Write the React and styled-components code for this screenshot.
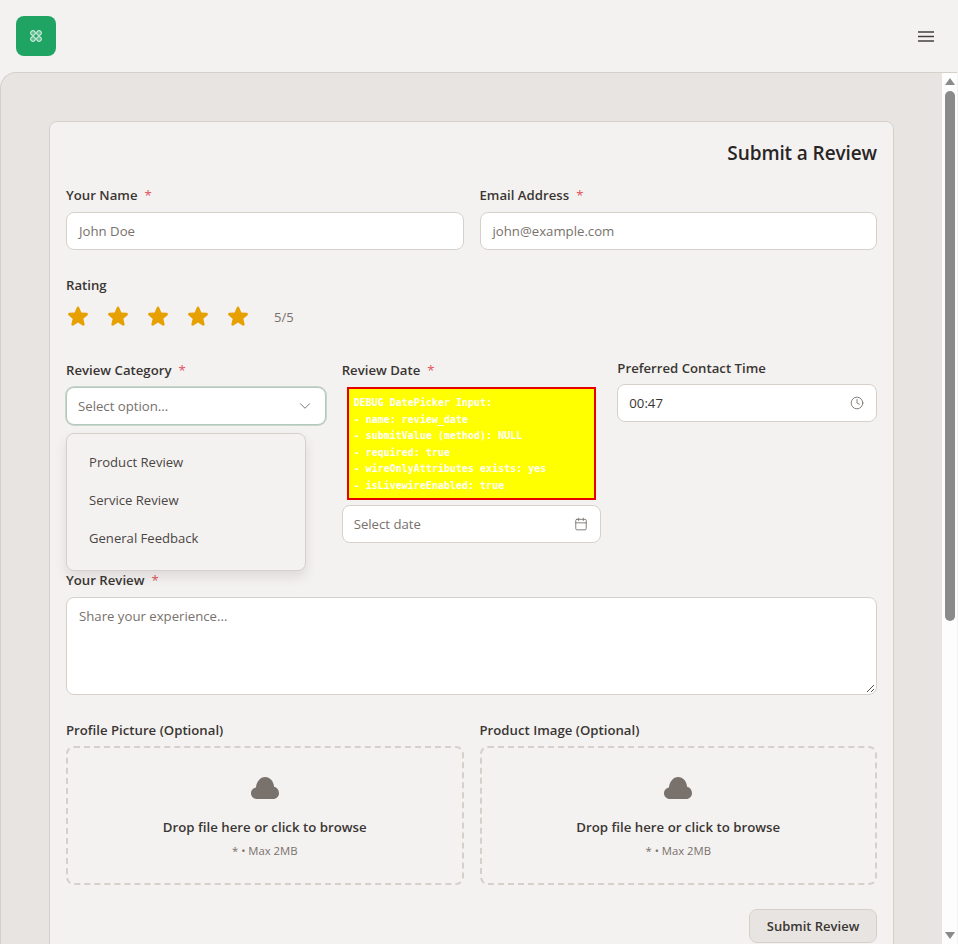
import React from "react";
import styled, { createGlobalStyle } from "styled-components";
import { ChevronDown, Clock, Calendar } from "lucide-react";

const GlobalStyle = createGlobalStyle`
  html, body {
    margin: 0;
    padding: 0;
    height: 100%;
    overflow: hidden;
    background: #f4f2f1;
  }

  * {
    box-sizing: border-box;
  }

  body {
    font-family: "Open Sans", "Noto Sans", "Liberation Sans", sans-serif;
    color: #33302e;
  }
`;

const Page = styled.div`
  height: 944px;
  display: flex;
  flex-direction: column;
  background: #f4f2f1;
`;

const TopBar = styled.header`
  height: 72px;
  flex: none;
  display: flex;
  align-items: center;
  justify-content: space-between;
  padding: 0 24px 0 16px;
`;

const Logo = styled.div`
  width: 40px;
  height: 40px;
  border-radius: 8px;
  background: #20a464;
  display: flex;
  align-items: center;
  justify-content: center;
`;

const MenuIcon = styled.svg`
  width: 16px;
  height: 11px;
  stroke: #44403c;
  stroke-width: 1.5;
`;

const MainPanel = styled.div`
  flex: 1;
  min-height: 0;
  display: flex;
  margin-right: 1px;
  background: #e8e4e1;
  border: 1px solid #d6d0ca;
  border-bottom: none;
  border-right: none;
  border-radius: 16px 0 0 0;
  overflow: hidden;
`;

const ScrollArea = styled.main`
  flex: 1;
  min-width: 0;
  overflow: hidden;
  padding: 48px 48px 0 48px;
`;

const Card = styled.section`
  background: #f4f2f1;
  border: 1px solid #d6d0ca;
  border-radius: 8px;
  padding: 16px;
`;

const Title = styled.h1`
  margin: 0 0 17px;
  font-size: 19px;
  font-weight: 600;
  line-height: 30px;
  letter-spacing: -0.1px;
  text-align: right;
  color: #292524;
`;

const TwoColumns = styled.div`
  display: grid;
  grid-template-columns: 1fr 1fr;
  gap: 16px;
`;

const ThreeColumns = styled.div`
  display: grid;
  grid-template-columns: 1fr 1fr 1fr;
  gap: 16px;
  margin-bottom: 27px;
`;

const Field = styled.div`
  position: relative;
  min-width: 0;
`;

const RaisedField = styled(Field)`
  margin-top: -2px;
`;

const Label = styled.label`
  display: block;
  font-size: 13.2px;
  font-weight: 600;
  line-height: 20px;
  margin-bottom: ${(p) => (p.$tight ? 6 : 7)}px;
  color: #3a3633;
  white-space: nowrap;
`;

const Required = styled.span`
  color: #e0525c;
  font-weight: 400;
  margin-left: 7px;
`;

const InputBox = styled.div`
  height: 38px;
  display: flex;
  align-items: center;
  justify-content: space-between;
  padding: 0 12px 0 ${(p) => (p.$narrow ? 11 : 12)}px;
  background: #fff;
  border: 1px solid ${(p) => (p.$focused ? "#b4c8bc" : "#d6d0ca")};
  border-radius: 8px;
  font-size: 13.2px;
  color: ${(p) => (p.$filled ? "#3a3633" : "#78716c")};
  box-shadow: ${(p) => (p.$focused ? "0 0 0 1px #c8d6cc" : "none")};
`;

const IconSlot = styled.span`
  display: flex;
  color: #78716c;
  margin-right: ${(p) => p.$mr || 0}px;
`;

const RatingBlock = styled.div`
  margin-bottom: 31px;
  margin-top: 25px;
`;

const Stars = styled.div`
  display: flex;
  align-items: center;
  height: 24px;
  margin-top: 10px;
`;

const StarIcon = styled.svg`
  width: 24px;
  height: 24px;
  margin-right: 16px;
  fill: #e6a100;
`;

const RatingValue = styled.span`
  margin-left: 8px;
  font-size: 13px;
  color: #78716c;
`;

const Dropdown = styled.div`
  position: absolute;
  z-index: 5;
  top: 73px;
  left: 0;
  width: 240px;
  height: 138px;
  padding: 9px 0;
  background: #f4f2f1;
  border: 1px solid #d6d0ca;
  border-radius: 8px;
  box-shadow: 0 6px 12px rgba(60, 50, 40, 0.12);
`;

const Option = styled.div`
  height: 38px;
  padding-left: 22px;
  display: flex;
  align-items: center;
  font-size: 13.1px;
  color: #4a4542;
`;

const DebugBox = styled.pre`
  margin: 0 5px 5px;
  height: 113px;
  padding: 6px 5px 0;
  background: #ffff00;
  border: 2px solid #e60000;
  color: #fff;
  font-family: "DejaVu Sans Mono", "Liberation Mono", monospace;
  font-size: 10px;
  font-weight: 700;
  line-height: 16.5px;
  overflow: hidden;
`;

const TextArea = styled.div`
  height: 98px;
  padding: 8px 12px;
  background: #fff;
  border: 1px solid #d6d0ca;
  border-radius: 8px;
  font-size: 13.2px;
  line-height: 20px;
  color: #78716c;
  position: relative;
  margin-bottom: 25px;
`;

const ResizeGrip = styled.svg`
  position: absolute;
  right: 1px;
  bottom: 1px;
  width: 9px;
  height: 9px;
  stroke: #57534e;
  stroke-width: 1;
`;

const DropZone = styled.div`
  height: 139px;
  border: 2px dashed #d6d0ca;
  border-radius: 8px;
  display: flex;
  flex-direction: column;
  align-items: center;
  padding-top: 28px;
`;

const CloudIcon = styled.svg`
  width: 28px;
  height: 24px;
  fill: #78716c;
`;

const DropText = styled.div`
  margin-top: 17px;
  font-size: 13.25px;
  font-weight: 600;
  line-height: 20px;
  color: #3a3633;
`;

const DropHint = styled.div`
  margin-top: 6px;
  font-size: 11.3px;
  line-height: 16px;
  color: #78716c;
`;

const Actions = styled.div`
  display: flex;
  justify-content: flex-end;
  margin-top: 24px;
`;

const SubmitButton = styled.button`
  width: 128px;
  height: 34px;
  border: 1px solid #d6d0ca;
  border-radius: 8px;
  background: #e8e4e1;
  font: 600 13px "Open Sans", "Noto Sans", sans-serif;
  color: #3a3633;
`;

const Scrollbar = styled.div`
  width: 15px;
  flex: none;
  background: #fdfdfd;
  display: flex;
  flex-direction: column;
  align-items: center;
  padding: 5px 0 5px;
`;

const ArrowUp = styled.div`
  width: 0;
  height: 0;
  border-left: 5px solid transparent;
  border-right: 5px solid transparent;
  border-bottom: 7px solid #8a8a8a;
`;

const ArrowDown = styled(ArrowUp)`
  border-bottom: none;
  border-top: 7px solid #8a8a8a;
  margin-top: auto;
`;

const Thumb = styled.div`
  width: 10px;
  height: 530px;
  margin-top: 6px;
  border-radius: 5px;
  background: #8a8a8a;
`;

const Star = () => (
  <StarIcon viewBox="0 0 24 24">
    <path d="M10.79 2.4c.46-1.1 1.96-1.1 2.42 0l2.08 5 5.4.43c1.18.1 1.66 1.58.76 2.35l-4.12 3.53 1.26 5.27c.27 1.15-.98 2.07-1.99 1.45L12 17.6l-4.6 2.83c-1.01.62-2.26-.3-1.99-1.45l1.26-5.27-4.12-3.53c-.9-.77-.42-2.25.76-2.35l5.4-.43 2.08-5z" />
  </StarIcon>
);

const Cloud = () => (
  <CloudIcon viewBox="0 0 28 24">
    <path d="M6 23C2.700 23 0 20.400 0 17.200c0-2.900 2.200-5.300 5-5.700C5.300 5.900 9.300 1 14.200 1c4.700 0 8.500 4.300 8.900 9.800 2.900.7 4.900 3.300 4.900 6.400 0 3.200-2.600 5.800-5.800 5.800H6z" />
  </CloudIcon>
);

const LogoMark = () => (
  <svg width="12" height="12" viewBox="0 0 12 12" stroke="#fff" strokeWidth="0.9" fill="rgba(255,255,255,0.28)">
    <circle cx="3" cy="3" r="2.4" />
    <circle cx="9" cy="3" r="2.4" />
    <circle cx="3" cy="9" r="2.4" />
    <circle cx="9" cy="9" r="2.4" />
  </svg>
);

const DEBUG_TEXT = `DEBUG DatePicker Input:
- name: review_date
- submitValue (method): NULL
- required: true
- wireOnlyAttributes exists: yes
- isLivewireEnabled: true`;

const UploadField = ({ label }) => (
  <Field>
    <Label $tight>{label}</Label>
    <DropZone>
      <Cloud />
      <DropText>Drop file here or click to browse</DropText>
      <DropHint>* • Max 2MB</DropHint>
    </DropZone>
  </Field>
);

export default function App() {
  return (
    <Page>
      <GlobalStyle />
      <TopBar>
        <Logo>
          <LogoMark />
        </Logo>
        <MenuIcon viewBox="0 0 16 11">
          <path d="M0 1 H16 M0 5.500 H16 M0 10 H16" />
        </MenuIcon>
      </TopBar>
      <MainPanel>
        <ScrollArea>
          <Card>
            <Title>Submit a Review</Title>
            <TwoColumns>
              <Field>
                <Label>
                  Your Name<Required>*</Required>
                </Label>
                <InputBox>John Doe</InputBox>
              </Field>
              <Field>
                <Label>
                  Email Address<Required>*</Required>
                </Label>
                <InputBox>john@example.com</InputBox>
              </Field>
            </TwoColumns>
            <RatingBlock>
              <Label>Rating</Label>
              <Stars>
                <Star />
                <Star />
                <Star />
                <Star />
                <Star />
                <RatingValue>5/5</RatingValue>
              </Stars>
            </RatingBlock>
            <ThreeColumns>
              <Field>
                <Label>
                  Review Category<Required>*</Required>
                </Label>
                <InputBox $focused $narrow>
                  Select option...
                  <IconSlot $mr={-1}>
                    <ChevronDown size={18} strokeWidth={1.25} />
                  </IconSlot>
                </InputBox>
                <Dropdown>
                  <Option>Product Review</Option>
                  <Option>Service Review</Option>
                  <Option>General Feedback</Option>
                </Dropdown>
              </Field>
              <Field>
                <Label>
                  Review Date<Required>*</Required>
                </Label>
                <DebugBox>{DEBUG_TEXT}</DebugBox>
                <InputBox $narrow>
                  Select date
                  <IconSlot>
                    <Calendar size={14} strokeWidth={1.5} />
                  </IconSlot>
                </InputBox>
              </Field>
              <RaisedField>
                <Label $tight>Preferred Contact Time</Label>
                <InputBox $filled $narrow>
                  00:47
                  <IconSlot>
                    <Clock size={14} strokeWidth={1.5} />
                  </IconSlot>
                </InputBox>
              </RaisedField>
            </ThreeColumns>
            <Field>
              <Label>
                Your Review<Required>*</Required>
              </Label>
              <TextArea>
                Share your experience...
                <ResizeGrip viewBox="0 0 9 9">
                  <path d="M1 8 L8 1 M5 8 L8 5" />
                </ResizeGrip>
              </TextArea>
            </Field>
            <TwoColumns>
              <UploadField label="Profile Picture (Optional)" />
              <UploadField label="Product Image (Optional)" />
            </TwoColumns>
            <Actions>
              <SubmitButton>Submit Review</SubmitButton>
            </Actions>
          </Card>
        </ScrollArea>
        <Scrollbar>
          <ArrowUp />
          <Thumb />
          <ArrowDown />
        </Scrollbar>
      </MainPanel>
    </Page>
  );
}
